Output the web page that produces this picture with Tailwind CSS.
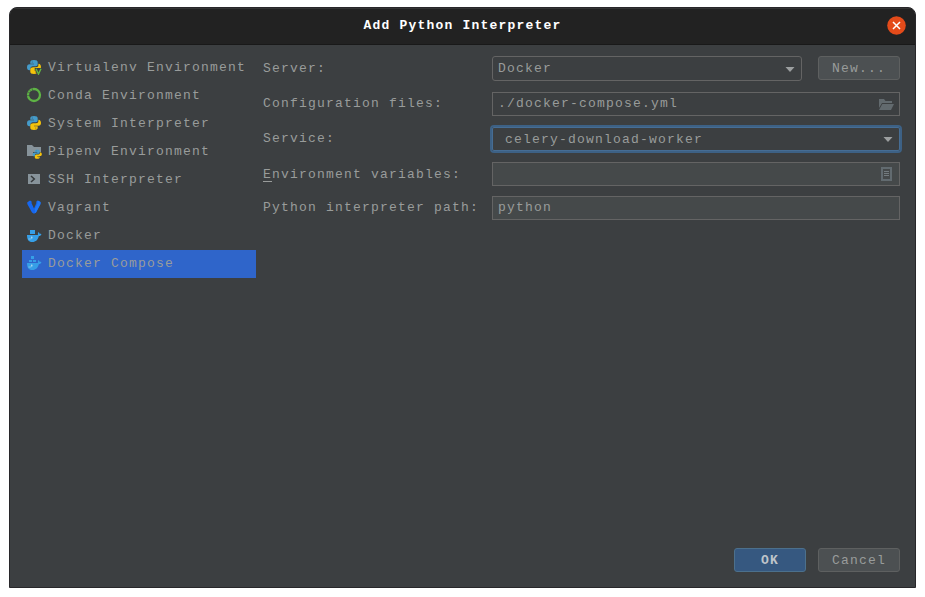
<!DOCTYPE html>
<html lang="en">
<head>
<meta charset="utf-8">
<title>Add Python Interpreter</title>
<script src="https://cdn.jsdelivr.net/npm/@tailwindcss/browser@4"></script>
</head>
<body class="bg-white w-[925px] h-[597px] overflow-hidden pl-[9px] pt-[7px] font-['Liberation_Mono',monospace] text-[13px] leading-[20px] tracking-[1.2px] text-[#999c9b]">
<svg class="hidden">
  <defs>
    <symbol id="python" viewBox="0 0 16 16">
      <path fill="#459bc9" d="M8 1C5.500 1 4.300 1.800 4.300 3.200v1.500H8v.6H3.500C1.800 5.300 1 6.500 1 8.200s.8 3 2.500 3h.9V9.800c0-1.500 1-2.500 2.500-2.500h2.800c1.300 0 2-.8 2-2v-2C11.700 1.800 10.500 1 8 1z"/>
      <path fill="#f5c30b" d="M8 15c2.500 0 3.700-.8 3.700-2.200v-1.500H8v-.6h4.500c1.700 0 2.500-1.200 2.500-2.700s-.8-3.200-2.500-3.200h-.1v1.100c0 1.300-1 2.300-2.400 2.300H7.200c-1.700 0-2.900.9-2.900 2.300v2.300C4.300 14.200 5.500 15 8 15z"/>
      <circle cx="6.300" cy="3" r=".6" fill="#3c5f75"/><circle cx="9.700" cy="13" r=".6" fill="#8d761d"/>
    </symbol>
    <symbol id="whale" viewBox="0 0 16 16">
      <path fill="#369fe7" d="M1 8h11c-.2-1-.2-2 .5-3 .8.600 1.100 1.200 1.200 1.900.6-.1 1.200 0 1.700.3-.3 1.100-1.200 1.700-2.500 1.800C11.900 12.700 10 15 6.300 15 2.500 15 1 12.500 1 8z"/>
      <path d="M2.500 12c1.600.2 3-.2 4-1" stroke="#9bd0ed" stroke-width=".8" fill="none"/><circle cx="5.700" cy="10.300" r=".8" fill="#b8def1"/>
    </symbol>
  </defs>
</svg>
<main class="w-[907px] h-[581px] rounded-t-[8px] bg-[#3c3f41] border border-[#28272a] flex flex-col overflow-hidden">
  <header class="h-[37px] shrink-0 bg-[#222222] border-b border-[#191919] border-t border-t-[#343434] grid grid-cols-[40px_1fr_40px] items-center pb-[2px]">
    <span></span>
    <h1 class="text-center font-bold text-white">Add Python Interpreter</h1>
    <button aria-label="Close" class="justify-self-end mr-[9px]"><svg class="block" width="19" height="19" viewBox="0 0 19 19"><circle cx="9.500" cy="9.500" r="9.300" fill="#e44b1a"/><path d="M6 6l7 7M13 6l-7 7" stroke="#fff" stroke-width="1.500"/></svg></button>
  </header>
  <div class="flex pl-[12px] pr-[15px] grow">
    <nav class="w-[234px] pt-[9px] shrink-0">
      <div class="h-[28px] flex items-center pl-[4px] gap-[6px]"><svg class="mb-[2px]" width="16" height="16" viewBox="0 0 16 16"><use href="#python"/><path d="M8.500 9h7.500V16H11z" fill="#3c3f41"/><path d="M10 9.800l2.500 5.300 2.500-5.300" fill="none" stroke="#62b543" stroke-width="1.400"/></svg>Virtualenv Environment</div>
      <div class="h-[28px] flex items-center pl-[4px] gap-[6px]"><svg class="mb-[2px]" width="16" height="16" viewBox="0 0 16 16"><circle cx="8" cy="8" r="6" fill="none" stroke="#5eb345" stroke-width="2.300"/><path d="M1.500 5l3 1M3 2.500L5.500 5M6 1l.8 3M1 8.500h3" stroke="#3c3f41" stroke-width=".5"/></svg>Conda Environment</div>
      <div class="h-[28px] flex items-center pl-[4px] gap-[6px]"><svg class="mb-[2px]" width="16" height="16"><use href="#python"/></svg>System Interpreter</div>
      <div class="h-[28px] flex items-center pl-[4px] gap-[6px]"><svg class="mb-[2px]" width="16" height="16" viewBox="0 0 16 16"><path d="M1 2h5l2 2h7v5H7v4H1z" fill="#87939a"/><svg x="6" y="6" width="10.500" height="10.500"><use href="#python"/></svg></svg>Pipenv Environment</div>
      <div class="h-[28px] flex items-center pl-[4px] gap-[6px]"><svg class="mb-[2px]" width="16" height="16" viewBox="0 0 16 16"><path d="M2 3h12v10H2z" fill="#87939a"/><path d="M5 5l3.300 3L5 11" fill="none" stroke="#35393b" stroke-width="1.500"/></svg>SSH Interpreter</div>
      <div class="h-[28px] flex items-center pl-[4px] gap-[6px]"><svg class="mb-[2px]" width="16" height="16" viewBox="0 0 16 16"><path d="M1.300 3.200L4 1.500l1.600 1v1.700L8 9.500l2.300-5.300V2.500l1.500-1 2.700 1.600v1.800L10 13.500l-2 1.300-2-1.300L1.300 4.900z" fill="#1767ef"/><path d="M11.800 1.500l2.700 1.600v1.800L10 13.500l-1 .6V10l2.500-5.500z" fill="#1f78f8"/></svg>Vagrant</div>
      <div class="h-[28px] flex items-center pl-[4px] gap-[6px]"><svg class="mb-[2px]" width="16" height="16" viewBox="0 0 16 16"><use href="#whale"/><path d="M4 3h5v4H4z" fill="#369fe7"/></svg>Docker</div>
      <div class="h-[28px] flex items-center pl-[4px] gap-[6px] bg-[#2f65ca]"><svg class="mb-[2px]" width="16" height="16" viewBox="0 0 16 16"><use href="#whale"/><path d="M5 1h3v3H5zM3 5h3v2H3zM7 5h3v2H7z" fill="#369fe7"/></svg>Docker Compose</div>
    </nav>
    <section class="grow ml-[7px] pt-[11px] flex flex-col">
      <div class="grid grid-cols-[229px_310px_82px] items-start h-[36px]">
        <label class="pt-[3px]">Server:</label>
        <div class="h-[25px] border border-[#646464] rounded-[3px] flex items-center justify-between pl-[5px] pr-[6px]">Docker<svg class="mt-[2px]" width="10" height="6"><path d="M.5 0h9L5 5z" fill="#9c9fa0"/></svg></div>
        <button class="ml-[16px] w-[82px] h-[24px] pt-px border border-[#5e6060] rounded-[3px] bg-[#4c5052]">New...</button>
      </div>
      <div class="grid grid-cols-[229px_408px] items-start h-[33px]">
        <label class="pt-[2px]">Configuration files:</label>
        <div class="h-[24px] border border-[#646464] flex items-center justify-between pl-[5px] pr-[5px]">./docker-compose.yml<svg width="16" height="14" viewBox="0 0 16 14"><path d="M1 2h5l1.500 2H14v2H4L1 11z" fill="#626a6e"/><path d="M4.300 7H16l-3 6H1z" fill="#626a6e"/></svg></div>
      </div>
      <div class="grid grid-cols-[227px_412px] items-start h-[37px]">
        <label class="pt-[4px]">Service:</label>
        <div class="h-[28px] border-[2px] border-[#3d6185] rounded-[4px]"><div class="h-[24px] pt-[2px] border border-[#466d94] rounded-[2px] flex items-center justify-between pl-[12px] pr-[6px]">celery-download-worker<svg width="10" height="6"><path d="M.5 0h9L5 5z" fill="#9c9fa0"/></svg></div></div>
      </div>
      <div class="grid grid-cols-[229px_408px] items-start h-[34px]">
        <label class="pt-[3px]"><span class="relative inline-block">E<i class="absolute left-0 bottom-[3px] w-[9px] h-px bg-[#999c9b]"></i></span>nvironment variables:</label>
        <div class="h-[24px] border border-[#646464] bg-[#45494a] flex items-center justify-end pr-[7px]"><svg width="11" height="14"><path d="M1 1h9v12H1z" fill="none" stroke="#626b70" stroke-width="2"/><path d="M3 4.500h5M3 6.500h5M3 8.500h5" stroke="#737b7f"/></svg></div>
      </div>
      <div class="grid grid-cols-[229px_408px] items-start h-[34px]">
        <label class="pt-[2px]">Python interpreter path:</label>
        <div class="h-[24px] border border-[#646464] bg-[#45494a] flex items-center pl-[5px]">python</div>
      </div>
      <div class="mt-auto mb-[15px] w-[637px] flex justify-end gap-[12px]">
        <button class="w-[72px] h-[24px] pt-px border border-[#4c708c] rounded-[3px] bg-[#365880] font-bold text-[#bfc4ca]">OK</button>
        <button class="w-[82px] h-[24px] pt-px border border-[#5e6060] rounded-[3px] bg-[#4c5052]">Cancel</button>
      </div>
    </section>
  </div>
</main>
</body>
</html>
